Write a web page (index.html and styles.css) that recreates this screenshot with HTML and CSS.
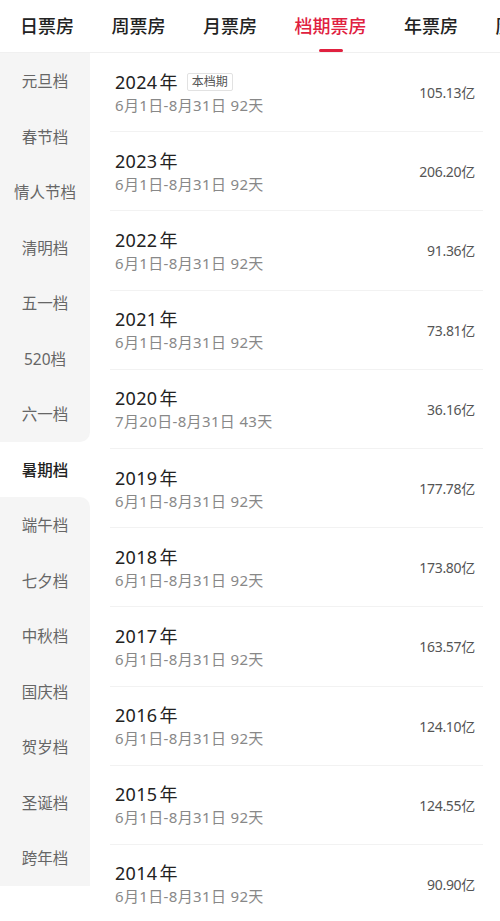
FILE: index.html
```html
<!DOCTYPE html>
<html lang="zh-CN">
<head>
<meta charset="utf-8">
<title>档期票房</title>
<link rel="stylesheet" href="styles.css">
</head>
<body>
<div class="page">
  <nav class="tabs">
    <div class="tab">日票房</div>
    <div class="tab">周票房</div>
    <div class="tab">月票房</div>
    <div class="tab active">档期票房</div>
    <div class="tab">年票房</div>
    <div class="tab">历史票房</div>
  </nav>
  <div class="body">
    <aside class="side">
      <div class="sitem">元旦档</div>
      <div class="sitem">春节档</div>
      <div class="sitem">情人节档</div>
      <div class="sitem">清明档</div>
      <div class="sitem">五一档</div>
      <div class="sitem">520档</div>
      <div class="sitem before">六一档</div>
      <div class="sitem selected">暑期档</div>
      <div class="sitem after">端午档</div>
      <div class="sitem">七夕档</div>
      <div class="sitem">中秋档</div>
      <div class="sitem">国庆档</div>
      <div class="sitem">贺岁档</div>
      <div class="sitem">圣诞档</div>
      <div class="sitem">跨年档</div>
    </aside>
    <main class="list">
      <div class="row"><div class="info"><div class="year">2024<span class="nian">年</span><span class="tag">本档期</span></div><div class="range">6月1日-8月31日 92天</div></div><div class="amount">105.13亿</div></div>
      <div class="row"><div class="info"><div class="year">2023<span class="nian">年</span></div><div class="range">6月1日-8月31日 92天</div></div><div class="amount">206.20亿</div></div>
      <div class="row"><div class="info"><div class="year">2022<span class="nian">年</span></div><div class="range">6月1日-8月31日 92天</div></div><div class="amount">91.36亿</div></div>
      <div class="row"><div class="info"><div class="year">2021<span class="nian">年</span></div><div class="range">6月1日-8月31日 92天</div></div><div class="amount">73.81亿</div></div>
      <div class="row"><div class="info"><div class="year">2020<span class="nian">年</span></div><div class="range">7月20日-8月31日 43天</div></div><div class="amount">36.16亿</div></div>
      <div class="row"><div class="info"><div class="year">2019<span class="nian">年</span></div><div class="range">6月1日-8月31日 92天</div></div><div class="amount">177.78亿</div></div>
      <div class="row"><div class="info"><div class="year">2018<span class="nian">年</span></div><div class="range">6月1日-8月31日 92天</div></div><div class="amount">173.80亿</div></div>
      <div class="row"><div class="info"><div class="year">2017<span class="nian">年</span></div><div class="range">6月1日-8月31日 92天</div></div><div class="amount">163.57亿</div></div>
      <div class="row"><div class="info"><div class="year">2016<span class="nian">年</span></div><div class="range">6月1日-8月31日 92天</div></div><div class="amount">124.10亿</div></div>
      <div class="row"><div class="info"><div class="year">2015<span class="nian">年</span></div><div class="range">6月1日-8月31日 92天</div></div><div class="amount">124.55亿</div></div>
      <div class="row"><div class="info"><div class="year">2014<span class="nian">年</span></div><div class="range">6月1日-8月31日 92天</div></div><div class="amount">90.90亿</div></div>
    </main>
  </div>
</div>
</body>
</html>
```
FILE: styles.css
```css
* { box-sizing: border-box; }
html, body {
  margin: 0;
  padding: 0;
  background: #fff;
}
body {
  font-family: "Noto Sans", "Noto Sans CJK SC", sans-serif;
  color: #222;
  width: 500px;
  height: 921px;
  overflow: hidden;
}
.page { width: 500px; }
.tabs {
  display: flex;
  gap: 37.5px;
  padding-left: 20px;
  height: 53px;
  border-bottom: 1px solid #f0f0f0;
  overflow: hidden;
  white-space: nowrap;
}
.tab {
  position: relative;
  flex: none;
  font-size: 18px;
  line-height: 52px;
  font-weight: 500;
  color: #222;
}
.tab.active { color: #e0213f; }
.tab.active::after {
  content: "";
  position: absolute;
  left: 50%;
  bottom: 0;
  width: 24px;
  height: 3px;
  margin-left: -12px;
  border-radius: 2px;
  background: #e0213f;
}
.body {
  display: flex;
}
.side {
  flex: none;
  width: 90px;
  display: flex;
  flex-direction: column;
}
.sitem {
  height: 55.5px;
  display: flex;
  align-items: center;
  justify-content: center;
  background: #f5f5f5;
  color: #666;
  font-size: 15.5px;
}
.sitem.before { border-bottom-right-radius: 10px; }
.sitem.after { border-top-right-radius: 10px; }
.sitem.selected {
  background: #fff;
  color: #222;
  font-weight: 500;
}
.list {
  flex: 1;
  min-width: 0;
  display: flex;
  flex-direction: column;
}
.row {
  height: 79.2px;
  margin: 0 17px 0 20px;
  padding: 0 8px 0 5px;
  border-bottom: 1px solid #f2f2f2;
  display: flex;
  align-items: center;
  justify-content: space-between;
}
.info {
  display: flex;
  flex-direction: column;
  gap: 1px;
}
.year {
  font-size: 18px;
  line-height: 24px;
  color: #222;
  letter-spacing: 0.3px;
  display: flex;
  align-items: center;
}
.nian { margin-left: 2px; }
.tag {
  margin-left: 9px;
  height: 18px;
  padding: 0 4px;
  border: 1px solid #e2e2e2;
  border-radius: 2px;
  font-size: 12px;
  line-height: 16px;
  letter-spacing: 0;
  color: #555;
}
.range {
  font-size: 15px;
  line-height: 20px;
  color: #888;
  letter-spacing: 0.35px;
}
.amount {
  font-size: 14px;
  color: #555;
  letter-spacing: -0.3px;
}
```
